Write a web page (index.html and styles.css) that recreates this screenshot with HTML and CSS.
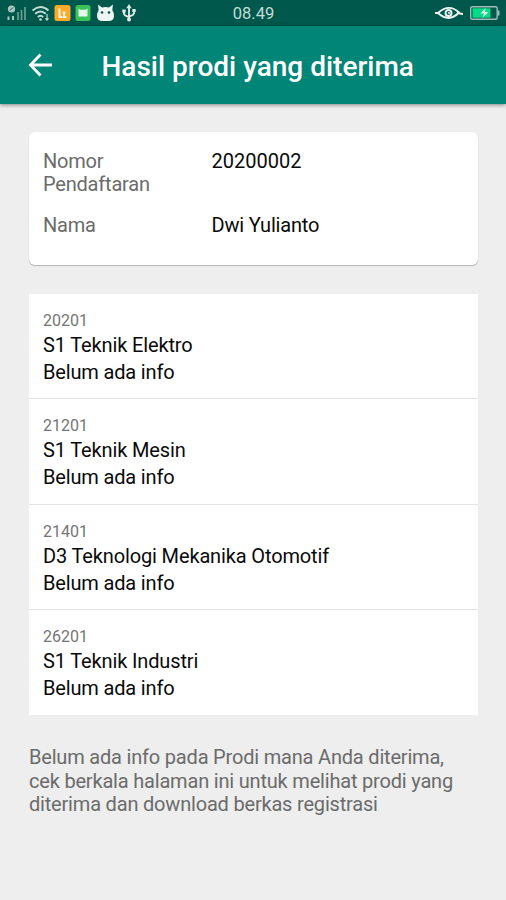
FILE: index.html
```html
<!DOCTYPE html>
<html lang="id">
<head>
    <meta charset="UTF-8">
    <meta name="viewport" content="width=device-width, initial-scale=1.0">
    <title>Hasil prodi yang diterima</title>
    <link rel="stylesheet" href="styles.css">
</head>
<body>
    <!-- Status bar -->
    <div class="status-bar">
        <div class="status-left">
            <svg width="20" height="18" viewBox="0 0 20 18">
                <circle cx="4.5" cy="5" r="3.6" fill="#a9c8c2"/>
                <path d="M3 6.500l3-3" stroke="#00574b" stroke-width="1"/>
                <path d="M1.5 16v-3.500M6 16v-4" stroke="#a9c8c2" stroke-width="2"/>
                <path d="M11 16V8M14.500 16V6M18 16V3" stroke="#6fa299" stroke-width="1.6"/>
            </svg>
            <svg class="wifi" width="18" height="18" viewBox="0 0 18 18" fill="none" stroke="#c5dbd7" stroke-width="1.9">
                <path d="M.5 6.500q8-7 16 0M3.200 9.800q5.300-4.800 10.600 0M5.800 13q2.700-2.600 5.400 0"/>
                <circle cx="8.500" cy="15.500" r="1.300" fill="#c5dbd7" stroke="none"/>
                <path d="M15 10v6m-1.500-1.700l1.500 1.700 1.500-1.700" stroke-width="1.200"/>
            </svg>
            <svg width="17" height="18" viewBox="0 0 17 18">
                <rect x="0.5" y="1" width="16" height="16" rx="2.5" fill="#fba928"/>
                <path d="M5.500 4.500v8.500h3M10 8v5h2.500M8.500 8.500h3" fill="none" stroke="#fff3dc" stroke-width="2"/>
            </svg>
            <svg class="green-app" width="16" height="18" viewBox="0 0 16 18">
                <rect x="0.5" y="1" width="15" height="16" rx="2.5" fill="#38c257"/>
                <path d="M3.5 4.500l2 1.200h5l2-1.200v8h-9z" fill="#e6f8e9"/>
            </svg>
            <svg class="android" width="19" height="18" viewBox="0 0 19 18">
                <path d="M2 .5l4 3q3.5-1 7 0l4-3-.7 5.5q2 3 1.7 6 0 5-5.500 5h-6q-5.500 0-5.500-5-.3-3 1.700-6z" fill="#eef6f4"/>
                <circle cx="6" cy="8.500" r="1.300" fill="#00574b"/>
                <circle cx="13" cy="8.500" r="1.300" fill="#00574b"/>
            </svg>
            <svg class="usb" width="14" height="18" viewBox="0 0 14 18" fill="none" stroke="#deebe9" stroke-width="1.900">
                <path d="M7 15V3M2 6.500v3q0 2 5 3.500M12 6v3q0 2-5 3.500"/>
                <path d="M7 0l2.700 4.200h-5.400z" fill="#deebe9" stroke="none"/>
                <circle cx="7" cy="15.500" r="2" fill="#deebe9" stroke="none"/>
                <path d="M.3 5.500h3.400v3h-3.400zM10.300 5h3.400v3h-3.400z" fill="#deebe9" stroke="none"/>
            </svg>
        </div>
        <div class="clock">08.49</div>
        <div class="status-right">
            <svg width="29" height="14" viewBox="0 0 29 14" fill="none" stroke="#edf5f3" stroke-width="1.900">
                <path d="M0 7h3Q14 -3 24 6.500Q14 17 3 7M22.500 6q2 2 5.500 2"/>
                <circle cx="13.500" cy="7" r="3"/>
                <circle cx="14" cy="7" r=".8" stroke-width="1"/>
            </svg>
            <svg width="30" height="14" viewBox="0 0 30 14">
                <rect x=".7" y=".7" width="26.500" height="12.600" rx="1.500" fill="none" stroke="#9fbdb8" stroke-width="1.400"/>
                <rect x="2.500" y="2.300" width="18" height="9.400" fill="#05dc87"/>
                <path d="M27.500 4.500h2v5h-2z" fill="#9fbdb8"/>
                <path d="M15.500 2l-5 5.500h3.500l-1.500 4.500 6-6h-3.500z" fill="#d5fbe9"/>
            </svg>
        </div>
    </div>

    <!-- App bar -->
    <header class="app-bar">
        <svg class="back" width="24" height="24" viewBox="0 0 24 24" fill="none" stroke="#fff" stroke-width="2.800">
            <path d="M24 12H2.500M12.500 1.500L2.500 12l10 10.500"/>
        </svg>
        <h1>Hasil prodi yang diterima</h1>
    </header>

    <main class="content">
        <div class="card">
            <div class="row">
                <span class="label">Nomor Pendaftaran</span>
                <span>20200002</span>
            </div>
            <div class="row">
                <span class="label">Nama</span>
                <span class="value-name">Dwi Yulianto</span>
            </div>
        </div>

        <ul class="prodi-list">
            <li>
                <div class="code">20201</div>
                <div class="name">S1 Teknik Elektro</div>
                <div class="info">Belum ada info</div>
            </li>
            <li>
                <div class="code">21201</div>
                <div class="name">S1 Teknik Mesin</div>
                <div class="info">Belum ada info</div>
            </li>
            <li>
                <div class="code">21401</div>
                <div class="name">D3 Teknologi Mekanika Otomotif</div>
                <div class="info">Belum ada info</div>
            </li>
            <li>
                <div class="code">26201</div>
                <div class="name">S1 Teknik Industri</div>
                <div class="info">Belum ada info</div>
            </li>
        </ul>

        <p class="note">Belum ada info pada Prodi mana Anda diterima, cek berkala halaman ini untuk melihat prodi yang diterima dan download berkas registrasi</p>
    </main>
</body>
</html>
```
FILE: styles.css
```css
* {
    box-sizing: border-box;
}

body {
    margin: 0;
    min-height: 900px;
    background-color: #eeeeee;
    color: #0a0a0a;
    font-family: Roboto, sans-serif;
    font-size: 20px;
    line-height: 23.4px;
}

.status-bar {
    display: grid;
    grid-template-columns: 1fr auto 1fr;
    align-items: center;
    height: 26px;
    padding: 0 6px 0 7px;
    background-color: #00574b;
}

.status-left,
.status-right {
    display: flex;
    align-items: center;
}

.status-left {
    gap: 4px;
}

.android {
    margin-left: 1px;
}

.usb {
    margin-left: 3px;
}

.status-right {
    justify-content: flex-end;
    gap: 6px;
}

.clock {
    padding-top: 2px;
    color: #c4dbd7;
    font-size: 16.5px;
    line-height: 24px;
}

.wifi {
    margin-left: 1px;
}

.app-bar {
    display: flex;
    align-items: center;
    height: 78px;
    padding-left: 28px;
    background-color: #008577;
    box-shadow: 0 1px 4px rgba(0, 0, 0, 0.45);
    color: #fff;
}

.app-bar h1 {
    margin: 0 0 0 49.5px;
    padding-top: 3px;
    font-size: 28px;
    font-weight: 500;
    line-height: 32px;
    white-space: nowrap;
}

.content {
    padding: 28px 28px 0 29px;
}

.card {
    height: 133px;
    padding: 18px 14px;
    background-color: #fff;
    border-radius: 6px;
    box-shadow: 0 1px 1px rgba(0, 0, 0, 0.25);
}

.row {
    display: grid;
    grid-template-columns: 120px 1fr;
    column-gap: 48.5px;
    margin-bottom: 17.5px;
}

.label {
    color: #6b6b6b;
    letter-spacing: -0.2px;
}

.value-name {
    letter-spacing: -0.2px;
}

.prodi-list {
    margin: 29px 0 0;
    padding: 0;
    list-style: none;
    background-color: #fff;
}

.prodi-list li {
    height: 105.3px;
    padding: 17px 14px 0;
    border-bottom: 1px solid #e4e4e4;
}

.prodi-list li:last-child {
    border-bottom: none;
}

.code {
    color: #757575;
    font-size: 16px;
    line-height: 19px;
}

.name {
    margin-top: 4px;
    letter-spacing: -0.14px;
}

.info {
    margin-top: 3.5px;
    letter-spacing: -0.16px;
}

.note {
    margin: 31px 0 0;
    color: #6b6b6b;
    letter-spacing: -0.19px;
}
```
